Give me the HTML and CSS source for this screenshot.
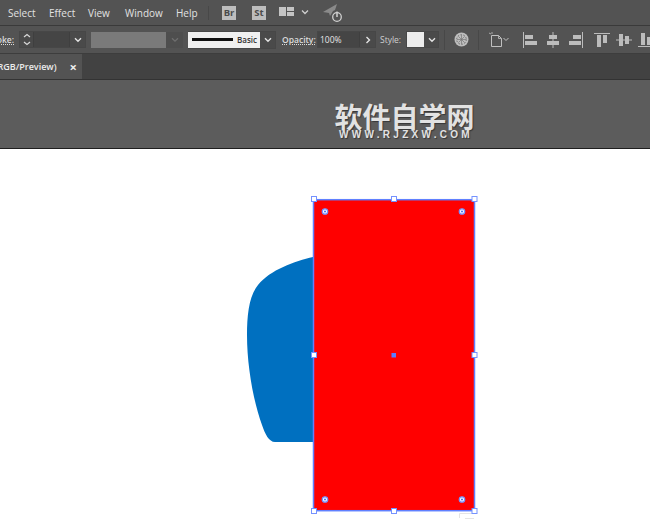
FILE: index.html
```html
<!DOCTYPE html>
<html lang="en">
<head>
<meta charset="utf-8">
<title>Illustrator</title>
<link rel="stylesheet" href="styles.css">
</head>
<body>
<div class="app">
  <header class="menubar">
    <nav class="menu">
      <span class="m-select">Select</span>
      <span class="m-effect">Effect</span>
      <span class="m-view">View</span>
      <span class="m-window">Window</span>
      <span class="m-help">Help</span>
    </nav>
    <i class="sep sep-menu"></i>
    <span class="app-badge">Br</span>
    <span class="app-badge badge-st">St</span>
    <svg class="ic-layout" width="16" height="10" viewBox="0 0 16 10"><path fill="#c4c4c4" d="M0 0h7v9H0zM8 0h7v4H8zM8 5h7v4H8z"/></svg>
    <svg class="ic-chev-menu" width="8" height="6" viewBox="0 0 8 6"><path d="M1 1.500l3 3 3-3" fill="none" stroke="#cfcfcf" stroke-width="1.300"/></svg>
    <svg class="ic-sync" width="20" height="20" viewBox="0 0 20 20"><path fill="#8a8a8a" d="M0 9L14 1l-2 6-2 1-3 5-1-3z"/><circle cx="14" cy="14" r="4.300" fill="#535353" stroke="#d0d0d0" stroke-width="1.300"/><path d="M14 8.500v5.500" stroke="#d0d0d0" stroke-width="1.500"/></svg>
  </header>

  <section class="controlbar">
    <span class="stroke-clip"><span class="label">Stroke:</span></span>
    <div class="field stroke-field">
      <span class="stepper"><svg width="8" height="13" viewBox="0 0 8 13"><path d="M1 4l3-2.500L7 4M1 9l3 2.500L7 9" fill="none" stroke="#d8d8d8" stroke-width="1.200"/></svg></span>
      <span class="input w-stroke"></span>
      <span class="chev"><svg width="8" height="6" viewBox="0 0 8 6"><path d="M1 1.200l3 3 3-3" fill="none" stroke="#e4e4e4" stroke-width="1.400"/></svg></span>
    </div>
    <div class="dis-group">
      <span class="dis-swatch"></span>
      <span class="chev dis-chev"><svg width="8" height="6" viewBox="0 0 8 6"><path d="M1 1.200l3 3 3-3" fill="none" stroke="#6e6e6e" stroke-width="1.300"/></svg></span>
    </div>
    <div class="field brush">
      <span class="brush-preview"><i class="brush-line"></i><span class="brush-name">Basic</span></span>
      <span class="chev"><svg width="8" height="6" viewBox="0 0 8 6"><path d="M1 1.200l3 3 3-3" fill="none" stroke="#e4e4e4" stroke-width="1.400"/></svg></span>
    </div>
    <span class="label lbl-opacity">Opacity:</span>
    <div class="field opacity">
      <span class="input w-opacity">100%</span>
      <span class="chev"><svg width="6" height="8" viewBox="0 0 6 8"><path d="M1.500 1l3 3-3 3" fill="none" stroke="#e4e4e4" stroke-width="1.400"/></svg></span>
    </div>
    <span class="lbl-style">Style:</span>
    <div class="field style-field">
      <span class="style-swatch"></span>
      <span class="chev"><svg width="8" height="6" viewBox="0 0 8 6"><path d="M1 1.200l3 3 3-3" fill="none" stroke="#e4e4e4" stroke-width="1.400"/></svg></span>
    </div>
    <i class="sep sep-style"></i>
    <svg class="ic-globe" width="15" height="15" viewBox="0 0 15 15"><circle cx="7.500" cy="7.500" r="7" fill="#bdbdbd"/><circle cx="7.500" cy="7.500" r="4.800" fill="none" stroke="#6a6a6a" stroke-width="1" stroke-dasharray="1.500 1.500"/><path d="M7.500 3v9M3 7.500h9M4.500 4.500l6 6M10.500 4.500l-6 6" stroke="#777" stroke-width=".7"/></svg>
    <i class="sep sep-globe"></i>
    <svg class="ic-transform" width="21" height="15" viewBox="0 0 21 15"><path d="M2.500 3.500h7l3 3v8h-10z" fill="none" stroke="#c0c0c0" stroke-width="1"/><path d="M9.500 3.500v3h3" fill="none" stroke="#c0c0c0" stroke-width=".8"/><path d="M0 1l2 1M3 0v2" stroke="#c0c0c0" stroke-width=".8"/><path d="M14.500 6l2.500 2.500L19.500 6" fill="none" stroke="#c0c0c0" stroke-width="1"/></svg>
    <div class="aligns">
      <svg width="14" height="16" viewBox="0 0 14 16"><path fill="#bcbcbc" d="M0 0h1v16H0zM2 3h8v4H2zM2 9h12v4H2z"/></svg>
      <svg width="12" height="16" viewBox="0 0 12 16"><path fill="#bcbcbc" d="M5.500 0h1v16h-1zM2 3h8v4H2zM0 9h12v4H0z"/></svg>
      <svg width="14" height="16" viewBox="0 0 14 16"><path fill="#bcbcbc" d="M13 0h1v16h-1zM4 3h8v4H4zM0 9h12v4H0z"/></svg>
      <div class="aligns-v">
        <svg width="16" height="14" viewBox="0 0 16 14"><path fill="#bcbcbc" d="M0 0h16v1H0zM3 2h4v12H3zM9 2h4v8H9z"/></svg>
        <svg width="16" height="12" viewBox="0 0 16 12"><path fill="#bcbcbc" d="M0 5.500h16v1H0zM3 0h4v12H3zM9 2h4v8H9z"/></svg>
        <svg width="16" height="14" viewBox="0 0 16 14"><path fill="#bcbcbc" d="M0 13h16v1H0zM3 0h4v12H3zM9 4h4v8H9z"/></svg>
      </div>
    </div>
  </section>

  <div class="tabbar">
    <div class="tab"><span class="tab-title">(RGB/Preview)</span><span class="tab-close">×</span></div>
  </div>

  <div class="ruler">
    <div class="watermark">
      <span class="wm-cn">软件自学网</span>
      <span class="wm-en">WWW.RJZXW.COM</span>
    </div>
  </div>

  <main class="canvas">
    <svg class="art" width="650" height="371" viewBox="0 149 650 371">
      <path fill="#0070c0" d="M313 257C295 261 270 270 258 285C249 296 247 315 247 335C247 365 253 400 262 425C265 434 269 442 275 442L313 442Z"/>
      <rect x="313" y="199.500" width="161.500" height="311.500" fill="#ff0000"/>
      <path d="M459.500 518V513.500H474M465 518.500H474" fill="none" stroke="#e4e4e4"/>
      <rect x="313.500" y="199.700" width="161" height="311" fill="none" stroke="#6080ff" stroke-width="1.500"/>
      <g fill="#fff" stroke="#7592ff" stroke-width="1.300">
        <circle cx="325" cy="211.500" r="2.700"/><circle cx="462" cy="211.500" r="2.700"/><circle cx="325" cy="499.500" r="2.700"/><circle cx="462" cy="499.500" r="2.700"/>
      </g>
      <g fill="#3f66ee">
        <circle cx="325" cy="211.500" r="1"/><circle cx="462" cy="211.500" r="1"/><circle cx="325" cy="499.500" r="1"/><circle cx="462" cy="499.500" r="1"/>
      </g>
      <g fill="#fff" stroke="#7592ff">
        <rect x="311.500" y="196.500" width="5" height="5"/><rect x="391.500" y="196.500" width="5" height="5"/><rect x="472" y="196.500" width="5" height="5"/>
        <rect x="311.500" y="352.500" width="5" height="5"/><rect x="472" y="352.500" width="5" height="5"/>
        <rect x="311.500" y="508.500" width="5" height="5"/><rect x="391.500" y="508.500" width="5" height="5"/><rect x="472" y="508.500" width="5" height="5"/>
      </g>
      <rect x="391.500" y="353" width="4.500" height="4.500" fill="#5b7cff"/>
    </svg>
  </main>
</div>
</body>
</html>
```

FILE: styles.css
```css
* { box-sizing: border-box; }
html, body { margin: 0; padding: 0; background: #fff; }
body { width: 650px; height: 519px; overflow: hidden; font-family: "Open Sans", "Noto Sans", sans-serif; }
.app { display: flex; flex-direction: column; width: 650px; height: 519px; overflow: hidden; }

.menubar { flex: 0 0 26px; display: flex; align-items: center; background: #535353; border-bottom: 1px solid #3a3a3a; color: #e2e2e2; font-size: 10px; }
.menu { display: flex; padding-left: 8px; width: 208px; }
.m-select { width: 41px; }
.m-effect { width: 39px; }
.m-view { width: 37px; }
.m-window { width: 51px; }
.sep { display: block; width: 1px; background: #484848; flex: none; }
.sep-menu { height: 14px; }
.app-badge { width: 14px; height: 14px; margin-left: 13px; background: #bdbdbd; color: #4b4b4b; font-size: 9.500px; font-weight: 700; line-height: 14px; text-align: center; }
.badge-st { margin-left: 16px; }
.ic-layout { margin-left: 13px; margin-top: -2px; }
.ic-chev-menu { margin-left: 6px; margin-top: -2px; }
.ic-sync { margin-left: 14px; margin-top: 1px; }

.controlbar { flex: 0 0 28px; display: flex; align-items: center; background: #535353; border-bottom: 1px solid #3d3d3d; color: #dcdcdc; font-size: 8.500px; }
.label { font-weight: 600; white-space: nowrap; text-decoration: underline dotted 1px; text-underline-offset: 1px; flex: none; }
.stroke-clip { display: flex; justify-content: flex-end; width: 14px; overflow: hidden; flex: none; }
.field { display: flex; height: 17px; border: 1px solid #474747; background: #4a4a4a; flex: none; }
.chev { display: flex; align-items: center; justify-content: center; width: 15px; flex: none; }
.stroke-field { width: 67px; margin-left: 5px; }
.stepper { width: 15px; display: flex; align-items: center; justify-content: center; border-right: 1px solid #3f3f3f; }
.input { display: block; background: #454545; border-right: 1px solid #3f3f3f; }
.w-stroke { width: 37px; }
.dis-group { display: flex; height: 16px; margin-left: 5px; flex: none; }
.dis-swatch { width: 75px; background: #7a7a7a; }
.dis-chev { width: 17px; background: #4e4e4e; }
.brush { width: 88px; margin-left: 5px; height: 18px; border-left: 0; }
.brush-preview { display: flex; align-items: center; width: 72px; background: #f0f0f0; color: #333; padding-left: 4px; font-size: 8px; font-weight: 600; }
.brush-line { display: block; width: 41px; height: 3px; background: #111; margin-right: 4px; flex: none; }
.lbl-opacity { margin-left: 6px; width: 32px; }
.opacity { width: 59px; margin-left: 3px; color: #e6e6e6; }
.w-opacity { width: 43px; padding-left: 2px; line-height: 15px; font-size: 8.500px; }
.opacity .chev { width: 15px; }
.lbl-style { margin-left: 4px; width: 22px; color: #cfcfcf; flex: none; }
.style-field { width: 33px; margin-left: 4px; }
.style-swatch { width: 17px; background: #ececec; flex: none; }
.sep-style { height: 20px; margin-left: 5px; }
.ic-globe { margin-left: 9px; flex: none; }
.sep-globe { height: 20px; margin-left: 9px; }
.ic-transform { margin-left: 10px; flex: none; }
.aligns { display: flex; align-items: center; gap: 10px; margin-left: 13px; flex: none; }
.aligns-v { display: flex; align-items: center; gap: 6px; margin-left: 1px; }

.tabbar { flex: 0 0 26px; display: flex; background: #424242; border-bottom: 1px solid #333; }
.tab { display: flex; justify-content: flex-end; align-items: center; width: 82px; background: #535353; color: #ececec; font-size: 9px; font-weight: 600; overflow: hidden; white-space: nowrap; flex: none; padding-right: 5px; }
.tab-title { flex: none; }
.tab-close { flex: none; margin-left: 13px; font-size: 13px; line-height: 12px; font-weight: 700; }

.ruler { flex: 0 0 69px; display: flex; background: #5c5c5c; border-bottom: 1px solid #1e1e1e; }
.watermark { display: flex; flex-direction: column; align-items: center; margin-left: 335px; margin-top: 23px; width: 139px; color: #e2e2e2; text-shadow: 1px 1px 1px rgba(0,0,0,.4); }
.wm-cn { font-family: "Noto Sans CJK SC", sans-serif; font-size: 28px; font-weight: 700; line-height: 26px; white-space: nowrap; }
.wm-en { font-family: "Liberation Sans", sans-serif; font-size: 10px; font-weight: 700; letter-spacing: 3.300px; line-height: 10px; white-space: nowrap; margin-top: 1px; margin-right: -3px; }

.canvas { flex: 1; position: relative; background: #fff; min-height: 0; }
.art { position: absolute; left: 0; top: 0; display: block; }
```
